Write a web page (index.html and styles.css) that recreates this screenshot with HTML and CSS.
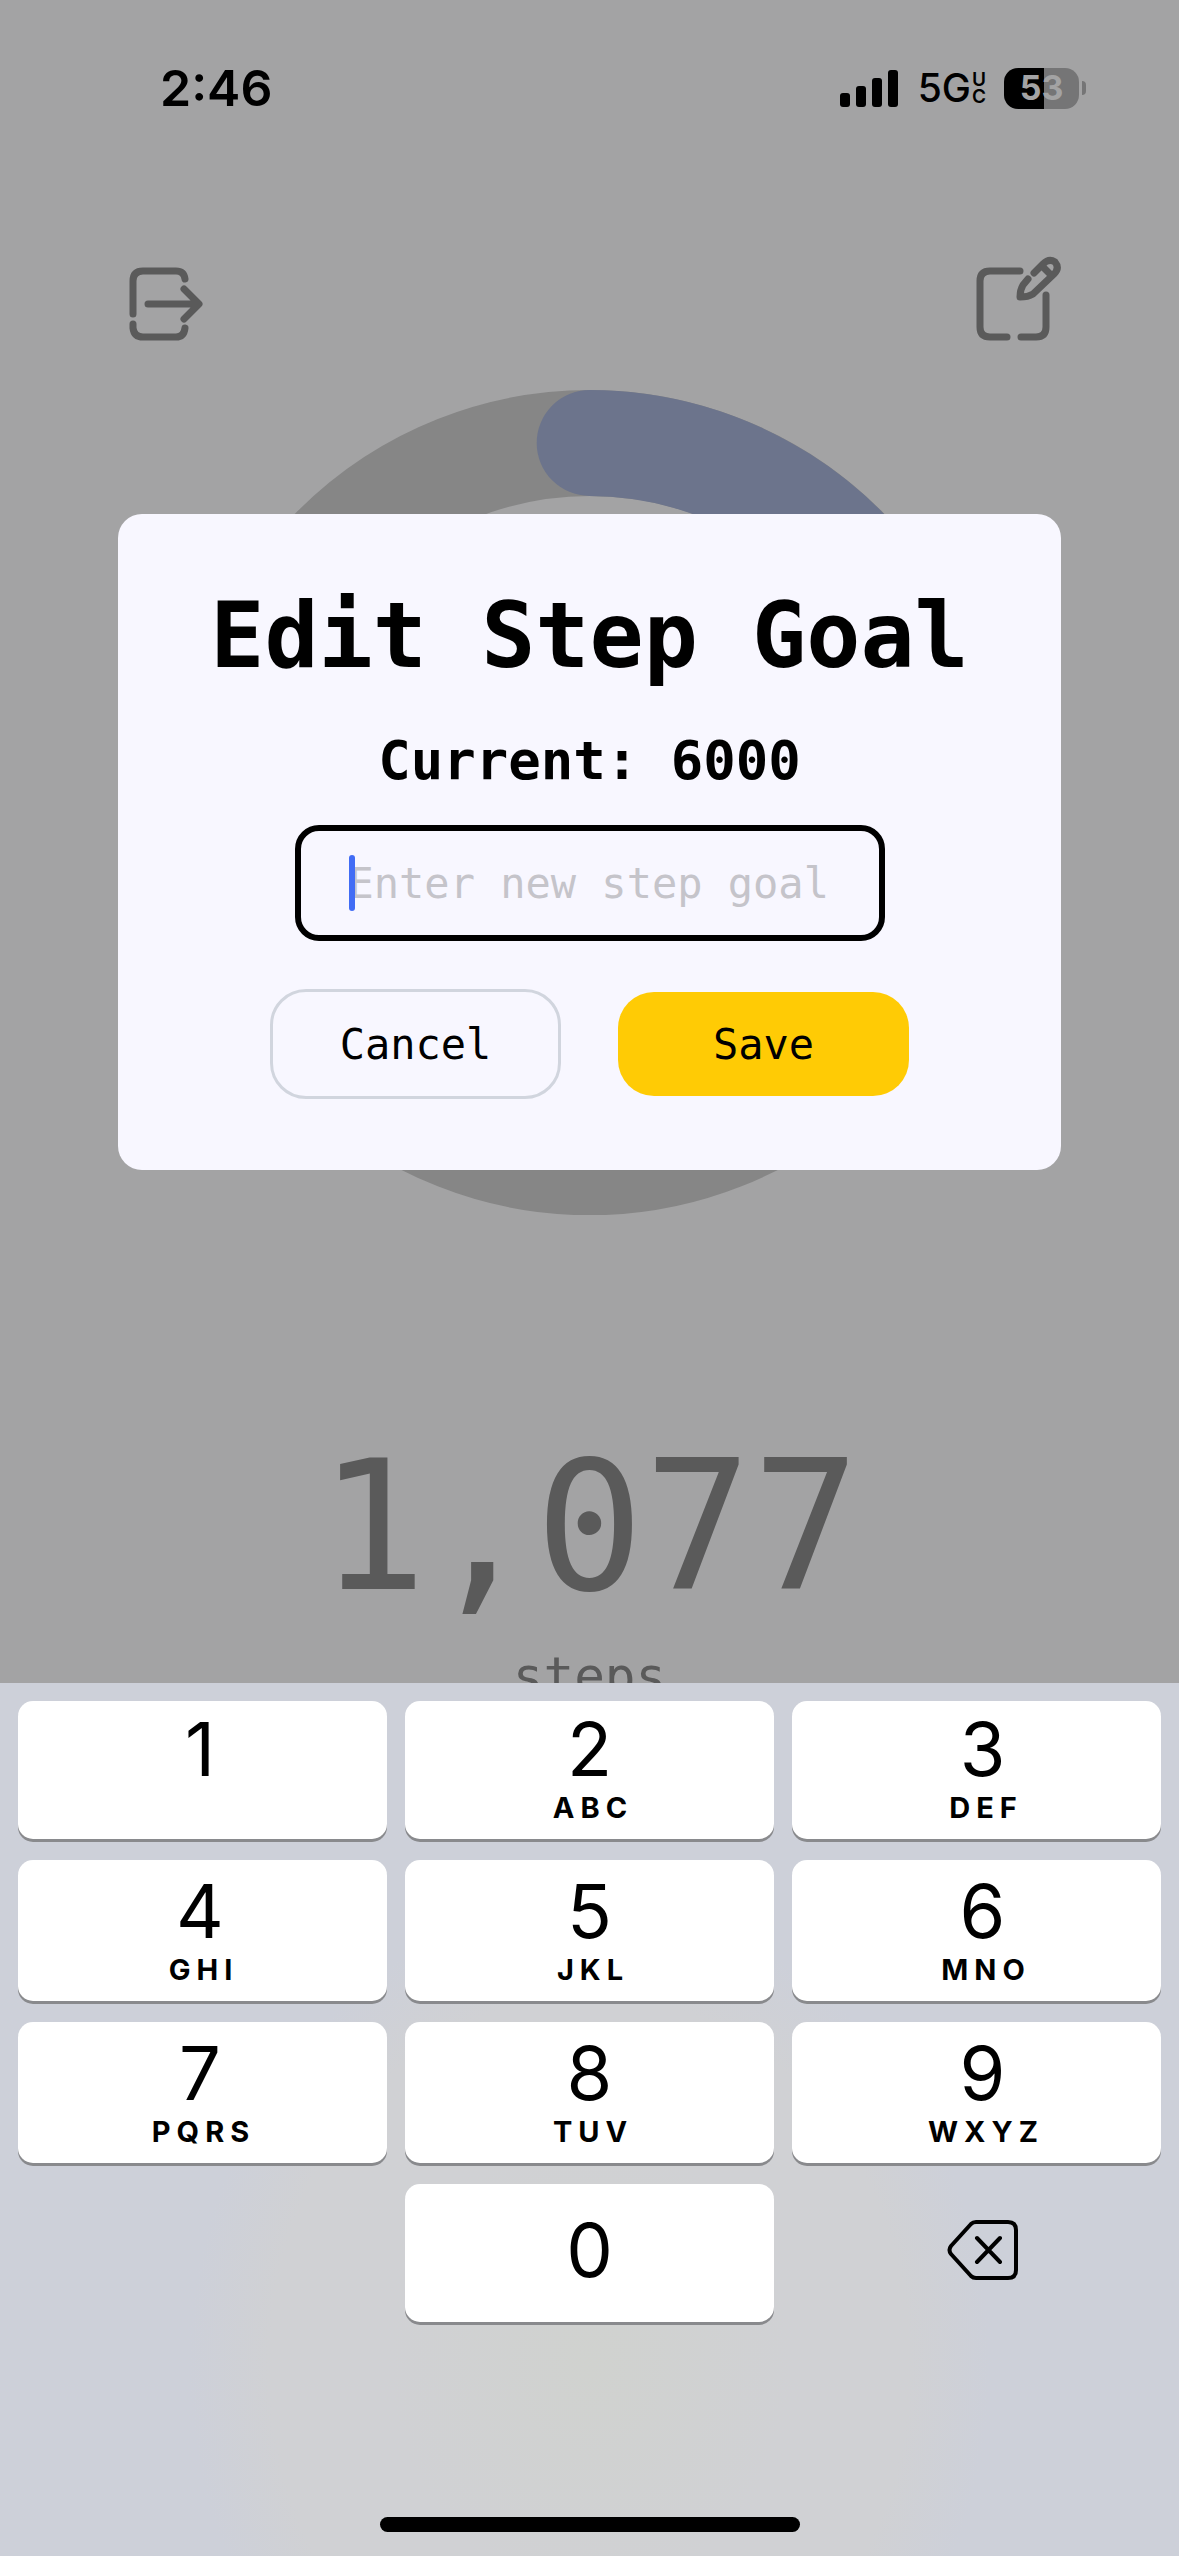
FILE: index.html
```html
<!DOCTYPE html>
<html lang="en">
<head>
<meta charset="utf-8">
<meta name="viewport" content="width=device-width, initial-scale=1">
<title>Edit Step Goal</title>
<link rel="stylesheet" href="styles.css">
</head>
<body>
<div class="screen">
  <div class="stage">
    <header class="status">
      <span class="time">2:46</span>
      <div class="status-right">
        <svg class="signal" viewBox="0 0 58 38" aria-hidden="true">
          <rect x="0" y="24" width="10" height="14" rx="3"/>
          <rect x="16" y="17" width="10" height="21" rx="3"/>
          <rect x="32" y="9" width="10" height="29" rx="3"/>
          <rect x="48" y="1" width="10" height="37" rx="3"/>
        </svg>
        <div class="network"><span>5G</span><span class="carrier"><span>U</span><span>C</span></span></div>
        <div class="battery">
          <div class="battery-body"><span>5</span><span>3</span></div>
          <div class="battery-tip"></div>
        </div>
      </div>
    </header>

    <nav class="toolbar">
      <button class="icon-button" type="button" aria-label="Sign out">
        <svg viewBox="26 14 88 88" aria-hidden="true">
          <path d="M33 74V41Q33 31 43 31H76Q84 31 85 39M33 84V88Q34 97 43 97H76Q84 97 85 88M48 64H98M84 49L99 64L84 79"/>
        </svg>
      </button>
      <button class="icon-button" type="button" aria-label="Edit goal">
        <svg viewBox="26 14 88 88" aria-hidden="true">
          <path d="M70 31H40Q30 31 30 41V87Q30 97 40 97H57M71 97H86Q96 97 96 87V55"/>
          <path d="M78 39L73 45Q70 50 70 57Q78 57 83 54L104 34Q110 28 105 22Q99 18 93 24L84 33M92 26L101 35"/>
        </svg>
      </button>
    </nav>

    <svg class="ring" viewBox="0 0 826 826" aria-hidden="true">
      <circle class="ring-track" cx="413" cy="413" r="360"/>
      <path class="ring-progress" d="M413 53A360 360 0 0 1 738 259"/>
    </svg>

    <div class="count">1,077</div>
    <div class="unit">steps</div>

    <div class="overlay">
      <form class="dialog" role="dialog" aria-labelledby="dialog-title">
        <h1 class="title" id="dialog-title">Edit Step Goal</h1>
        <p class="current">Current: 6000</p>
        <div class="field">
          <input class="goal" type="text" inputmode="numeric" aria-label="New step goal" placeholder="Enter new step goal">
          <span class="caret"></span>
        </div>
        <div class="actions">
          <button class="action cancel" type="button">Cancel</button>
          <button class="action save" type="submit">Save</button>
        </div>
      </form>
    </div>
  </div>

  <div class="keyboard">
    <div class="keys">
      <button class="key left" type="button">1<span class="letters"></span></button>
      <button class="key" type="button">2<span class="letters">ABC</span></button>
      <button class="key right" type="button">3<span class="letters">DEF</span></button>
      <button class="key left" type="button">4<span class="letters">GHI</span></button>
      <button class="key" type="button">5<span class="letters">JKL</span></button>
      <button class="key right" type="button">6<span class="letters">MNO</span></button>
      <button class="key left" type="button">7<span class="letters">PQRS</span></button>
      <button class="key" type="button">8<span class="letters">TUV</span></button>
      <button class="key right" type="button">9<span class="letters">WXYZ</span></button>
      <button class="key zero" type="button">0</button>
      <button class="key right delete" type="button" aria-label="Delete">
        <svg viewBox="0 0 72 62" aria-hidden="true">
          <path d="M29 3H61Q69 3 69 11V51Q69 59 61 59H29Q26 59 24 57L4 35Q1 31 4 27L24 5Q26 3 29 3ZM30 19L53 43M53 19L30 43"/>
        </svg>
      </button>
    </div>
    <div class="home"></div>
  </div>
</div>
</body>
</html>
```
FILE: styles.css
```css
* {
  box-sizing: border-box;
}

body {
  margin: 0;
  background: #a3a3a4;
  color: #000;
  font-family: Inter, "Liberation Sans", sans-serif;
}

button,
input {
  font: inherit;
  color: inherit;
  border: 0;
  padding: 0;
  background: none;
}

.screen {
  display: flex;
  flex-direction: column;
  height: 100vh;
}

.stage {
  position: relative;
  display: flex;
  flex: 1;
  flex-direction: column;
  align-items: center;
  min-height: 0;
  overflow: hidden;
  color: #5a5a5a;
  font-family: "DejaVu Sans Mono", "Liberation Mono", monospace;
}

.stage > * {
  flex-shrink: 0;
}

/* Status bar */
.status {
  display: flex;
  align-items: center;
  justify-content: space-between;
  width: 100%;
  height: 176px;
  padding: 0 93px 0 160px;
  color: #000;
  font-family: Inter, "Liberation Sans", sans-serif;
}

.time {
  font-size: 50px;
  font-weight: 600;
}

.status-right {
  display: flex;
  align-items: center;
}

.signal {
  width: 58px;
  height: 38px;
  margin-right: 20px;
}

.network {
  display: flex;
  align-items: center;
  gap: 1px;
  margin-right: 18px;
  font-size: 40px;
  font-weight: 500;
  line-height: 40px;
}

.network > span:first-child {
  font-size: 39px;
}

.carrier {
  display: flex;
  flex-direction: column;
  font-size: 19px;
  font-weight: 600;
  line-height: 17px;
}

.battery {
  display: flex;
  align-items: center;
  gap: 3px;
}

.battery-body {
  display: flex;
  align-items: center;
  justify-content: center;
  width: 75px;
  height: 41px;
  border-radius: 14px;
  background: linear-gradient(90deg, #000 53%, #757576 53%);
  color: #a3a3a4;
  font-size: 34px;
  font-weight: 700;
  line-height: 40px;
}

.battery-tip {
  width: 4px;
  height: 14px;
  border-radius: 0 4px 4px 0;
  background: #757576;
}

/* Step counter */
.toolbar {
  display: flex;
  justify-content: space-between;
  width: 100%;
  margin-top: 78px;
  padding: 0 115px 0 126px;
}

.icon-button {
  width: 88px;
  height: 88px;
}

.icon-button svg {
  display: block;
  width: 100%;
  fill: none;
  stroke: #5a5a5a;
  stroke-width: 7;
  stroke-linecap: round;
  stroke-linejoin: round;
}

.ring {
  width: 70%;
  margin-top: 48px;
  fill: none;
  stroke-width: 106;
  stroke-linecap: round;
}

.ring-track {
  stroke: #868686;
}

.ring-progress {
  stroke: #6c748c;
}

.count {
  margin-top: 204px;
  font-size: 180px;
  line-height: 216px;
}

.unit {
  margin-top: 12px;
  font-size: 51px;
  line-height: 60px;
}

/* Goal dialog */
.overlay {
  position: absolute;
  inset: 0;
  display: flex;
  align-items: center;
  justify-content: center;
}

.dialog {
  display: flex;
  flex-direction: column;
  align-items: center;
  width: 80%;
  padding: 68px 24px 71px;
  border-radius: 24px;
  background: #f8f7ff;
  color: #000;
}

.title {
  margin: 0;
  font-size: 90px;
  line-height: 108px;
  white-space: nowrap;
}

.current {
  margin: 35px 0 28px;
  font-size: 54px;
  font-weight: 700;
  line-height: 72px;
}

.field {
  position: relative;
  width: 590px;
  max-width: 100%;
}

.goal {
  display: block;
  width: 100%;
  height: 116px;
  padding: 2px 48px 0;
  border: 6px solid #000;
  border-radius: 24px;
  outline: 0;
  font-size: 42px;
}

.goal::placeholder {
  color: #c5c4ca;
  opacity: 1;
}

.caret {
  position: absolute;
  top: 30px;
  left: 54px;
  width: 6px;
  height: 56px;
  border-radius: 3px;
  background: #416cf5;
}

.actions {
  display: flex;
  align-items: center;
  gap: 57px;
  margin-top: 48px;
}

.action {
  width: 291px;
  height: 104px;
  padding-top: 2px;
  border-radius: 36px;
  font-size: 42px;
}

.cancel {
  height: 110px;
  border: 3px solid #d1d5de;
}

.save {
  background: #ffcb05;
}

/* Number pad */
.keyboard {
  padding: 18px 18px 24px;
  background: radial-gradient(ellipse 400px 460px at 50% 78%, #d0d2cf 0%, #d0d1d4 50%, #d0d1d4 80%, #cdd0d9 100%);
}

.keys {
  display: grid;
  grid-template-columns: repeat(3, 1fr);
  grid-template-rows: 138px 141px 141px 138px;
  gap: 21px 18px;
}

.key {
  display: flex;
  flex-direction: column;
  align-items: center;
  justify-content: flex-end;
  padding-bottom: 13px;
  border-radius: 15px;
  background: #fff;
  box-shadow: 0 3px 0 #898a8d;
  font-size: 74px;
  line-height: 72px;
}

.left {
  padding-right: 5px;
}

.right {
  padding-left: 12px;
}

.letters {
  height: 36px;
  margin-top: 5px;
  padding-left: 7px;
  font-size: 29px;
  font-weight: 700;
  letter-spacing: 6px;
  line-height: 36px;
}

.zero {
  grid-column: 2;
  justify-content: center;
  padding-bottom: 6px;
}

.delete {
  justify-content: center;
  padding-bottom: 6px;
  background: none;
  box-shadow: none;
}

.delete svg {
  width: 72px;
  height: 62px;
  fill: none;
  stroke: #000;
  stroke-width: 4;
  stroke-linecap: round;
  stroke-linejoin: round;
}

.home {
  width: 420px;
  height: 15px;
  margin: 195px auto 0;
  border-radius: 8px;
  background: #000;
}
```
